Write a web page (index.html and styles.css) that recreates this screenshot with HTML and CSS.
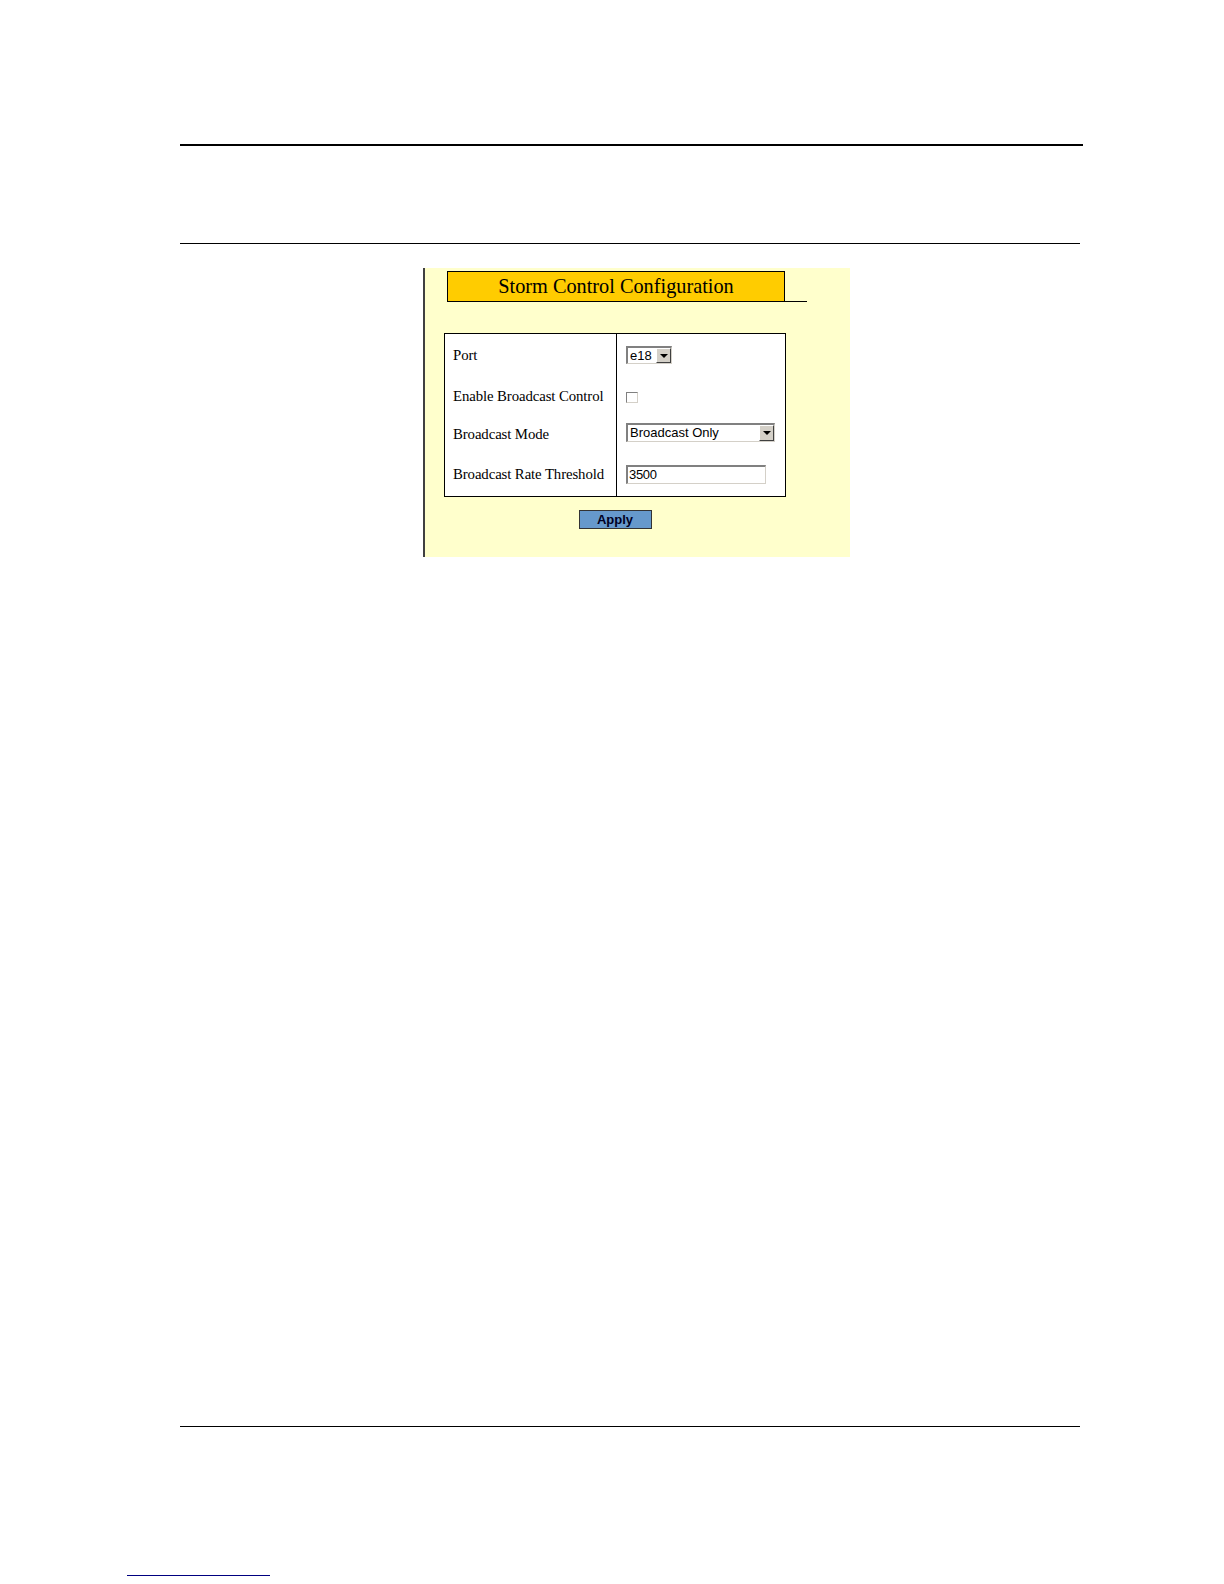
FILE: index.html
```html
<!DOCTYPE html>
<html>
<head>
<meta charset="utf-8">
<title>Storm Control Configuration</title>
<link rel="stylesheet" href="styles.css">
</head>
<body>
<div class="page">
  <div class="rule-top"></div>
  <div class="rule-second"></div>
  <div class="panel">
    <div class="title-row">
      <div class="title-box">Storm Control Configuration</div>
      <div class="title-tail"></div>
    </div>
    <div class="form-grid">
      <div class="label">Port</div>
      <div class="ctrl">
        <div class="select select-port"><span class="sel-text">e18</span><span class="sel-btn"><span class="tri"></span></span></div>
      </div>
      <div class="label">Enable Broadcast Control</div>
      <div class="ctrl"><div class="checkbox"></div></div>
      <div class="label">Broadcast Mode</div>
      <div class="ctrl">
        <div class="select select-mode"><span class="sel-text">Broadcast Only</span><span class="sel-btn"><span class="tri"></span></span></div>
      </div>
      <div class="label">Broadcast Rate Threshold</div>
      <div class="ctrl"><div class="textbox">3500</div></div>
    </div>
    <div class="btn-row"><div class="apply">Apply</div></div>
  </div>
  <div class="rule-bottom"></div>
  <div class="link-line"></div>
</div>
</body>
</html>
```

FILE: styles.css
```css
html, body {
  margin: 0;
  padding: 0;
  background: #ffffff;
}
.page {
  width: 1224px;
  height: 1584px;
  overflow: hidden;
  font-family: "Liberation Serif", "Times New Roman", serif;
}
.rule-top {
  margin-top: 144px;
  margin-left: 180px;
  width: 903px;
  height: 2px;
  background: #000;
}
.rule-second {
  margin-top: 97px;
  margin-left: 180px;
  width: 900px;
  height: 1px;
  background: #000;
}
.panel {
  margin-top: 24px;
  margin-left: 423px;
  width: 427px;
  height: 289px;
  background: #ffffcc;
  border-left: 2px solid #404040;
  box-sizing: border-box;
  padding-top: 3px;
}
.title-row {
  display: flex;
  align-items: flex-end;
  margin-left: 22px;
}
.title-box {
  width: 338px;
  height: 31px;
  box-sizing: border-box;
  background: #ffcc00;
  border: 1px solid #000;
  font-size: 20.3px;
  line-height: 28px;
  text-align: center;
  color: #000;
}
.title-tail {
  width: 22px;
  height: 1px;
  background: #000;
}
.form-grid {
  margin-top: 31px;
  margin-left: 19px;
  width: 342px;
  box-sizing: border-box;
  border: 1px solid #000;
  background: #ffffff;
  display: grid;
  grid-template-columns: 172px 168px;
  grid-template-rows: 42px 40px 37px 43px;
}
.label {
  border-right: 1px solid #000;
  padding-left: 8px;
  font-size: 14.8px;
  color: #000;
  display: flex;
  align-items: center;
  white-space: nowrap;
  letter-spacing: -0.1px;
}
.ctrl {
  padding-left: 9px;
  display: flex;
  align-items: center;
}
.select {
  display: flex;
  box-sizing: border-box;
  background: #fff;
  border-top: 2px solid #808080;
  border-left: 2px solid #808080;
  border-right: 1px solid #d4d0c8;
  border-bottom: 1px solid #d4d0c8;
  font-family: "Liberation Sans", Arial, sans-serif;
  font-size: 13px;
  color: #000;
}
.select-port {
  width: 46px;
  height: 18px;
}
.select-mode {
  width: 149px;
  height: 19px;
  margin-bottom: 4px;
}
.sel-text {
  flex: 1;
  padding-left: 2px;
  line-height: 15px;
  white-space: nowrap;
  overflow: hidden;
}
.sel-btn {
  width: 15px;
  box-sizing: border-box;
  background: #d4d0c8;
  border-top: 1px solid #ffffff;
  border-left: 1px solid #ffffff;
  border-right: 1px solid #404040;
  border-bottom: 1px solid #404040;
  display: flex;
  align-items: center;
  justify-content: center;
}
.tri {
  width: 0;
  height: 0;
  border-left: 4px solid transparent;
  border-right: 4px solid transparent;
  border-top: 4px solid #000;
}
.checkbox {
  width: 12px;
  height: 11px;
  box-sizing: border-box;
  background: #fff;
  border-top: 1px solid #808080;
  border-left: 1px solid #808080;
  border-right: 1px solid #d4d0c8;
  border-bottom: 1px solid #d4d0c8;
  margin-top: 2px;
}
.textbox {
  width: 140px;
  height: 19px;
  box-sizing: border-box;
  background: #fff;
  border-top: 2px solid #808080;
  border-left: 2px solid #808080;
  border-right: 1px solid #d4d0c8;
  border-bottom: 1px solid #d4d0c8;
  font-family: "Liberation Sans", Arial, sans-serif;
  font-size: 13px;
  line-height: 15px;
  padding-left: 1px;
  color: #000;
  letter-spacing: -0.3px;
}
.btn-row {
  margin-left: 19px;
  width: 342px;
  display: flex;
  justify-content: center;
  margin-top: 13px;
}
.apply {
  width: 73px;
  height: 19px;
  box-sizing: border-box;
  background: #6699cc;
  border: 1px solid #333;
  font-family: "Liberation Sans", Arial, sans-serif;
  font-weight: bold;
  font-size: 13px;
  line-height: 17px;
  text-align: center;
  color: #000022;
}
.rule-bottom {
  margin-top: 869px;
  margin-left: 180px;
  width: 900px;
  height: 1px;
  background: #000;
}
.link-line {
  margin-top: 148px;
  margin-left: 127px;
  width: 143px;
  height: 1px;
  background: #000080;
}
```
